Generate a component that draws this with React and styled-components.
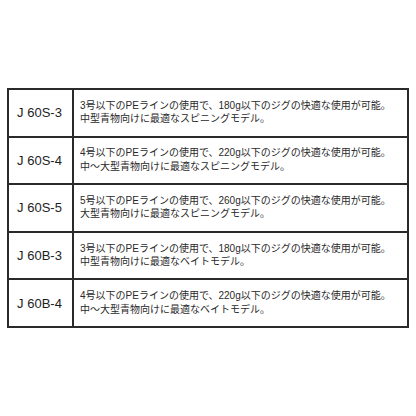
import React from "react";
import styled, { createGlobalStyle } from "styled-components";

const Global = createGlobalStyle`
  html, body { margin: 0; padding: 0; background: #fff; }
  body { width: 416px; height: 416px; overflow: hidden; }
`;

const Page = styled.div`
  width: 416px;
  height: 416px;
  box-sizing: border-box;
  padding: 88px 0 0 7px;
`;

const Table = styled.table`
  width: 402px;
  border-collapse: collapse;
  table-layout: fixed;
  border: 2px solid #222;
`;

const Row = styled.tr`
  height: 47.6px;
`;

const NameCell = styled.td`
  width: 61px;
  border: 2px solid #2a2a2a;
  text-align: center;
  vertical-align: middle;
  font-family: "Liberation Sans", Arial, sans-serif;
  font-size: 13px;
  color: #1e1e1e;
  padding: 0 2px 0 0;
  white-space: nowrap;
`;

const DescCell = styled.td`
  border: 2px solid #2a2a2a;
  vertical-align: middle;
  padding: 0 0 1px 6px;
  font-family: "Liberation Sans", "Noto Sans CJK JP", sans-serif;
  font-size: 10px;
  line-height: 13.5px;
  color: #2a2a2a;
  white-space: nowrap;
`;

const rows = [
  ["J 60S-3", "3号以下のPEラインの使用で、180g以下のジグの快適な使用が可能。", "中型青物向けに最適なスピニングモデル。"],
  ["J 60S-4", "4号以下のPEラインの使用で、220g以下のジグの快適な使用が可能。", "中〜大型青物向けに最適なスピニングモデル。"],
  ["J 60S-5", "5号以下のPEラインの使用で、260g以下のジグの快適な使用が可能。", "大型青物向けに最適なスピニングモデル。"],
  ["J 60B-3", "3号以下のPEラインの使用で、180g以下のジグの快適な使用が可能。", "中型青物向けに最適なベイトモデル。"],
  ["J 60B-4", "4号以下のPEラインの使用で、220g以下のジグの快適な使用が可能。", "中〜大型青物向けに最適なベイトモデル。"],
];

export default function App() {
  return (
    <Page>
      <Global />
      <Table>
        <tbody>
          {rows.map(([name, l1, l2]) => (
            <Row key={name}>
              <NameCell>{name}</NameCell>
              <DescCell>
                {l1}
                <br />
                {l2}
              </DescCell>
            </Row>
          ))}
        </tbody>
      </Table>
    </Page>
  );
}
